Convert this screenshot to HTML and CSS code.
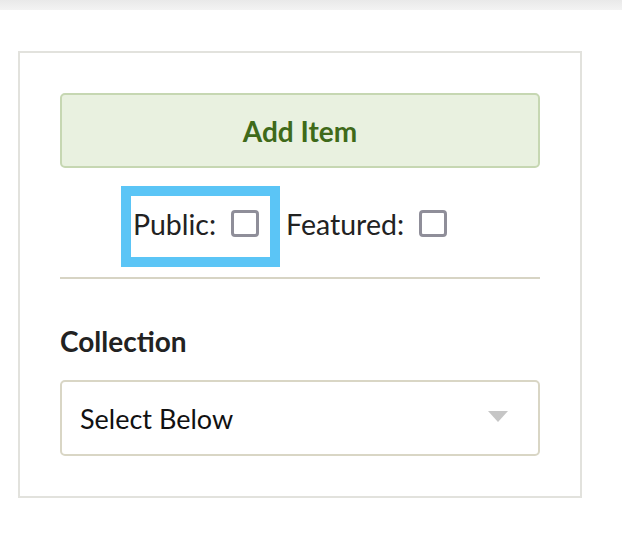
FILE: index.html
```html
<!DOCTYPE html>
<html lang="en">
<head>
<meta charset="utf-8">
<title>Add Item</title>
<link rel="stylesheet" href="styles.css">
</head>
<body>
<div class="topbar"></div>
<main class="page">
  <section class="panel">
    <button class="add-btn" type="button">Add Item</button>
    <div class="flags">
      <label class="flag flag-focus">Public: <span class="box"></span></label>
      <label class="flag">Featured: <span class="box"></span></label>
    </div>
    <hr class="sep">
    <h3 class="field-label">Collection</h3>
    <div class="select">
      <span class="select-text">Select Below</span>
      <span class="caret"></span>
    </div>
  </section>
</main>
</body>
</html>
```
FILE: styles.css
```css
html, body {
  margin: 0;
  padding: 0;
  background: #ffffff;
}
body {
  font-family: Lato, "Open Sans", "Liberation Sans", sans-serif;
  color: #222222;
}
.topbar {
  height: 10px;
  background: linear-gradient(#e9e9e9, #f3f3f3);
}
.page {
  padding: 41px 40px 0 18px;
}
.panel {
  border: 2px solid #e2e2dd;
  padding: 40px 40px 40px 40px;
  box-sizing: border-box;
  width: 564px;
}
.add-btn {
  display: flex;
  align-items: center;
  justify-content: center;
  width: 100%;
  height: 75px;
  box-sizing: border-box;
  border: 2px solid #c6d7b2;
  border-radius: 5px;
  background: #e9f1e0;
  color: #3f6a1a;
  font-family: Lato, "Open Sans", sans-serif;
  font-weight: 700;
  font-size: 28px;
  padding: 0;
  margin: 0;
}
.flags {
  display: flex;
  justify-content: center;
  margin-top: 28px;
  padding-right: 22px;
  gap: 14px;
}
.flag {
  display: flex;
  align-items: center;
  height: 61px;
  box-sizing: border-box;
  padding: 0 11px 6px 2px;
  font-size: 28.5px;
  color: #222;
}
.flag:last-child {
  padding-right: 0;
}
.flag-focus {
  outline: 10px solid #5bc5f6;
}
.box {
  display: inline-block;
  width: 28px;
  height: 27px;
  box-sizing: border-box;
  border: 3px solid #8f8e99;
  border-radius: 4px;
  margin-left: 15px;
  background: #fff;
}
.sep {
  border: 0;
  height: 2px;
  background: #d7d4c4;
  margin: 20px 0 0 0;
}
.field-label {
  margin: 46px 0 0 0;
  font-size: 28px;
  font-weight: 700;
  line-height: 32px;
  color: #222;
}
.select {
  display: flex;
  align-items: center;
  justify-content: space-between;
  margin-top: 23px;
  height: 76px;
  box-sizing: border-box;
  border: 2px solid #d9d6c5;
  border-radius: 5px;
  padding: 0 30px 0 18px;
  font-size: 27px;
  color: #111;
}
.caret {
  width: 0;
  height: 0;
  border-left: 10px solid transparent;
  border-right: 10px solid transparent;
  border-top: 11px solid #c6c6c6;
  margin-top: -4px;
}
```
